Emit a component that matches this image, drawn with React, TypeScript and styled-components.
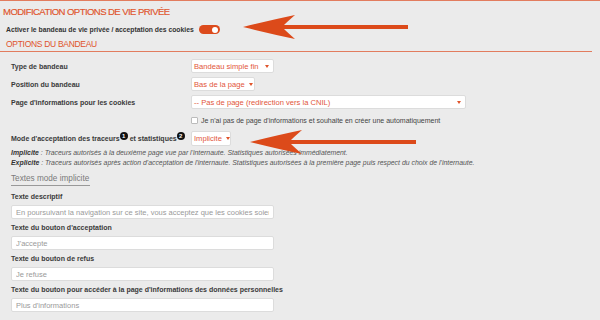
import styled, { createGlobalStyle } from "styled-components";

const GlobalStyle = createGlobalStyle`
    html, body {
        margin: 0;
        padding: 0;
        background: #ebebeb;
    }
    body {
        font-family: "Liberation Sans", Arial, sans-serif;
        color: #3a3a3a;
    }
`

const orange = "#e0542b"
const lineOrange = "#e27c5e"

const Page = styled.div`
    position: relative;
    width: 600px;
    height: 320px;
    overflow: hidden;
    border-top: 1px solid ${lineOrange};
    box-sizing: border-box;
`

const Title = styled.h1`
    margin: 0;
    padding-left: 3px;
    height: 22px;
    line-height: 22px;
    font-size: 9.6px;
    letter-spacing: -0.6px;
    font-weight: 400;
    color: ${orange};
    -webkit-text-stroke: 0.15px ${orange};
`

const ToggleRow = styled.div`
    display: flex;
    align-items: center;
    gap: 5px;
    height: 13px;
    padding-left: 6px;
    font-size: 6.8px;
    font-weight: 700;
    color: #333;
`

const Toggle = styled.span<{ $on: boolean }>`
    display: inline-flex;
    align-items: center;
    justify-content: ${p => p.$on ? "flex-end" : "flex-start"};
    width: 21px;
    height: 9px;
    padding: 0 2px;
    box-sizing: border-box;
    border-radius: 5px;
    background: ${p => p.$on ? "#dc4b1c" : "#bbb"};

    &::after {
        content: "";
        width: 6px;
        height: 6px;
        border-radius: 50%;
        background: #fff;
    }
`

const SectionHead = styled.h2`
    margin: 0 8px 0 0;
    padding-left: 6px;
    height: 15px;
    line-height: 17px;
    font-size: 8.5px;
    letter-spacing: -0.3px;
    font-weight: 400;
    color: ${orange};
    border-bottom: 1px solid ${lineOrange};
`

const Form = styled.div`
    padding: 7px 0 0 11px;
    display: flex;
    flex-direction: column;
`

const Row = styled.div<{ $h: number, $mb: number }>`
    display: flex;
    align-items: center;
    height: ${p => p.$h}px;
    margin-bottom: ${p => p.$mb}px;
`

const RowLabel = styled.div`
    width: 180px;
    flex: none;
    font-size: 7px;
    font-weight: 700;
    color: #3a3a3a;
    display: flex;
    align-items: flex-start;
    white-space: nowrap;
`

const Select = styled.div<{ $w: number }>`
    display: flex;
    align-items: center;
    justify-content: space-between;
    width: ${p => p.$w}px;
    height: 100%;
    box-sizing: border-box;
    padding: 0 4px 0 2px;
    background: #fff;
    border: 1px solid #dcdcdc;
    border-radius: 2px;
    font-size: 7.6px;
    color: #e2553a;
    white-space: nowrap;

    &::after {
        content: "";
        flex: none;
        margin-left: 4px;
        border-left: 2.5px solid transparent;
        border-right: 2.5px solid transparent;
        border-top: 3px solid ${orange};
    }
`

const CheckRow = styled.label`
    display: flex;
    align-items: center;
    gap: 3px;
    margin-left: 180px;
    height: 14px;
    margin-bottom: 4px;
    font-size: 7px;
    color: #444;
    white-space: nowrap;
`

const Check = styled.span`
    width: 7px;
    height: 7px;
    box-sizing: border-box;
    border: 1px solid #bbb;
    border-radius: 1px;
    background: #fff;
`

const Badge = styled.span`
    display: inline-flex;
    align-items: center;
    justify-content: center;
    width: 8px;
    height: 8px;
    margin: -3px 2px 0 0;
    border-radius: 50%;
    background: #111;
    color: #fff;
    font-size: 6px;
    font-weight: 700;
`

const Help = styled.p`
    margin: 2px 0 0;
    font-size: 6.9px;
    line-height: 10px;
    font-style: italic;
    color: #555;
    white-space: nowrap;

    b {
        color: #333;
    }
`

const SubHead = styled.div`
    align-self: flex-start;
    margin-top: 4px;
    padding-right: 1px;
    height: 13px;
    line-height: 13px;
    font-size: 8.2px;
    color: #7a7a7a;
    border-bottom: 1px solid #999;
`

const Field = styled.div`
    display: flex;
    flex-direction: column;
    gap: 3px;
    margin-bottom: 4px;
`

const FieldLabel = styled.div`
    height: 10px;
    line-height: 10px;
    font-size: 7px;
    font-weight: 700;
    color: #3a3a3a;
    white-space: nowrap;
`

const Input = styled.input`
    width: 263px;
    height: 14px;
    box-sizing: border-box;
    padding: 0 4px;
    margin: 0;
    border: 1px solid #dcdcdc;
    border-radius: 2px;
    background: #fff;
    font-family: inherit;
    font-size: 7.5px;
    outline: none;

    &::placeholder {
        color: #9a9a9a;
    }
`

const ArrowSvg = styled.svg<{ $x: number, $y: number }>`
    position: absolute;
    left: ${p => p.$x}px;
    top: ${p => p.$y}px;
`

const Arrow = ({x, y, length}: { x: number, y: number, length: number }) => (
    <ArrowSvg $x={x} $y={y} width={length} height={26} viewBox={`0 0 ${length} 26`}>
        <path
            fill="#dc4a1a"
            d={`M0 13 Q28 6 52 1 Q44 8 41 11 L${length} 11 L${length} 15 L41 15 Q44 18 52 25 Q28 20 0 13 Z`}
        />
    </ArrowSvg>
)

const textFields = [
    {label: "Texte descriptif", placeholder: "En poursuivant la navigation sur ce site, vous acceptez que les cookies soient utilisés"},
    {label: "Texte du bouton d'acceptation", placeholder: "J'accepte"},
    {label: "Texte du bouton de refus", placeholder: "Je refuse"},
    {label: "Texte du bouton pour accéder à la page d'informations des données personnelles", placeholder: "Plus d'informations"},
]

export default function App() {
    return (
        <>
            <GlobalStyle/>
            <Page>
                <Title>MODIFICATION OPTIONS DE VIE PRIVÉE</Title>
                <ToggleRow>
                    Activer le bandeau de vie privée / acceptation des cookies
                    <Toggle $on/>
                </ToggleRow>
                <SectionHead>OPTIONS DU BANDEAU</SectionHead>

                <Form>
                    <Row $h={14} $mb={4}>
                        <RowLabel>Type de bandeau</RowLabel>
                        <Select $w={83}>Bandeau simple fin</Select>
                    </Row>
                    <Row $h={14} $mb={4}>
                        <RowLabel>Position du bandeau</RowLabel>
                        <Select $w={64}>Bas de la page</Select>
                    </Row>
                    <Row $h={14} $mb={4}>
                        <RowLabel>Page d'informations pour les cookies</RowLabel>
                        <Select $w={275}>-- Pas de page (redirection vers la CNIL)</Select>
                    </Row>
                    <CheckRow>
                        <Check/>
                        Je n'ai pas de page d'informations et souhaite en créer une automatiquement
                    </CheckRow>
                    <Row $h={15} $mb={0}>
                        <RowLabel>
                            Mode d'acceptation des traceurs<Badge>1</Badge>et statistiques<Badge>2</Badge>
                        </RowLabel>
                        <Select $w={40}>Implicite</Select>
                    </Row>

                    <Help>
                        <b>Implicite</b> : Traceurs autorisés à la deuxième page vue par l'internaute. Statistiques autorisées immédiatement.<br/>
                        <b>Explicite</b> : Traceurs autorisés après action d'acceptation de l'internaute. Statistiques autorisées à la première page puis respect du choix de l'internaute.
                    </Help>

                    <SubHead>Textes mode implicite</SubHead>

                    <div style={{height: 6}}/>
                    {textFields.map(f =>
                        <Field key={f.label}>
                            <FieldLabel>{f.label}</FieldLabel>
                            <Input placeholder={f.placeholder}/>
                        </Field>
                    )}
                </Form>

                <Arrow x={243} y={13} length={165}/>
                <Arrow x={250} y={128} length={166}/>
            </Page>
        </>
    )
}
